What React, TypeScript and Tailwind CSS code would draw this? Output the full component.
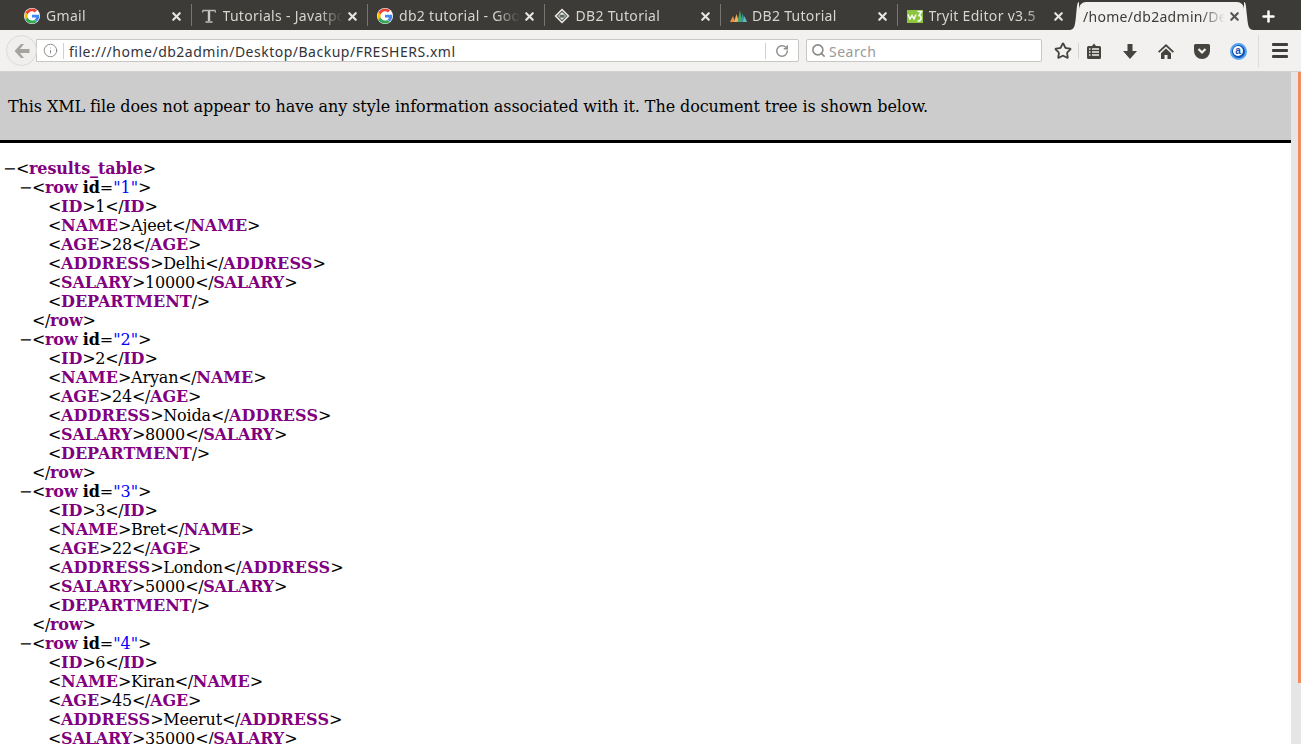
import { X, Info, RotateCw, Search, Star, Plus } from 'lucide-react'

function GoogleIcon() {
  return (
    <svg width="16" height="16" viewBox="0 0 48 48" className="shrink-0 rounded-full bg-white">
      <path fill="#EA4335" d="M24 10c3.500 0 6.400 1.200 8.800 3.300l6.200-6.200C35.200 3.700 30 1.500 24 1.500 15.200 1.500 7.700 6.500 4 13.800l7.300 5.700C13 14 18 10 24 10z" />
      <path fill="#4285F4" d="M45.500 24.500c0-1.600-.1-3.100-.4-4.500H24v8.600h12.100c-.5 2.800-2.100 5.100-4.500 6.700l7 5.400c4.100-3.800 6.900-9.400 6.900-16.200z" />
      <path fill="#FBBC05" d="M11.300 28.500c-.4-1.400-.7-2.900-.7-4.500s.3-3.100.7-4.500L4 13.800C2.400 16.900 1.500 20.400 1.500 24s.9 7.100 2.500 10.200l7.300-5.700z" />
      <path fill="#34A853" d="M24 46.500c6 0 11.100-2 14.600-5.400l-7-5.400c-2 1.300-4.500 2.100-7.600 2.100-6 0-11-4-12.700-9.300L4 34.200C7.700 41.500 15.200 46.500 24 46.500z" />
    </svg>
  )
}

function TypeIcon() {
  return (
    <svg width="16" height="16" viewBox="0 0 16 16" className="shrink-0" fill="none">
      <path d="M1.500 4.500 2 2.500H14L14.500 4.500" stroke="#b8b8b4" strokeWidth="1.300" />
      <path d="M8 3V13" stroke="#c8c8c4" strokeWidth="2.400" />
      <path d="M4.500 14H11.500" stroke="#d8d8d4" strokeWidth="1.300" />
    </svg>
  )
}

function DiamondIcon() {
  return (
    <svg width="16" height="16" viewBox="0 0 16 16" className="shrink-0">
      <path d="M8 .5 15.500 8 8 15.500.5 8z" fill="#f0f0ee" />
      <path d="M8 2.500 13.500 8 8 13.500 2.500 8z" fill="#55554f" />
      <path d="M8 4 12 8 8 12 4 8z" fill="#e4e4e0" />
      <rect x="5.500" y="6.800" width="5" height="2.800" fill="#5a6a5a" />
    </svg>
  )
}

function BarsIcon() {
  return (
    <svg width="17" height="13" viewBox="0 0 17 13" className="shrink-0">
      <path d="M0 12 3 6 5 12z" fill="#ee9040" />
      <path d="M4 12 6.500 4 9 12z" fill="#f0b060" />
      <path d="M7.500 12 10 0 12 12z" fill="#4aa860" />
      <path d="M10.500 12 12.500 3 15 12z" fill="#3a98a8" />
      <path d="M13 12 14.500 6 17 12z" fill="#68b8c0" />
    </svg>
  )
}

function W3Icon() {
  return (
    <svg width="16" height="13" viewBox="0 0 16 13" className="shrink-0">
      <rect width="16" height="13" fill="#8cc63f" />
      <path d="M1 4.500 3 9 5 5.500 7 9 9 4.500" fill="none" stroke="#fff" strokeWidth="1.400" />
      <path d="M10.500 1.500H14.500L12 5.500C15 5.500 15 11.500 10.500 11" fill="none" stroke="#fff" strokeWidth="1.500" />
    </svg>
  )
}

const tabs = [
  { title: 'Gmail', icon: <GoogleIcon /> },
  { title: 'Tutorials - Javatpoint', icon: <TypeIcon /> },
  { title: 'db2 tutorial - Google', icon: <GoogleIcon /> },
  { title: 'DB2 Tutorial', icon: <DiamondIcon /> },
  { title: 'DB2 Tutorial', icon: <BarsIcon /> },
  { title: 'Tryit Editor v3.5', icon: <W3Icon /> },
]

function Tab({ title, icon, last }: { title: string; icon: React.ReactNode; last: boolean }) {
  return (
    <div className="flex h-[30px] w-[176.5px] shrink-0 items-center pl-[9px] pt-[2px]">
      <div className="flex w-[16px] shrink-0 justify-center">{icon}</div>
      <span className="ml-[6px] mt-[-2px] min-w-0 flex-1 overflow-hidden whitespace-nowrap text-[14px] tracking-[0.3px] text-[#d6d5d0] [mask-image:linear-gradient(to_left,transparent,black_24px)]">{title}</span>
      <X size={13} strokeWidth={4} className="ml-[3px] mr-[8px] shrink-0 text-[#e6e6e2]" />
      <div className={`mt-[-2px] h-[22px] w-px shrink-0 ${last ? '' : 'bg-[#77766f]'}`} />
    </div>
  )
}

function TabBar() {
  return (
    <div className="flex h-[30px] items-stretch bg-[#3c3b37] pl-[15px]">
      {tabs.map((t, i) => (
        <Tab key={i} title={t.title} icon={t.icon} last={i === tabs.length - 1} />
      ))}
      <div className="ml-[-4px] mt-[2px] flex h-[28px] shrink-0">
        <svg width="9" height="28" viewBox="0 0 9 28" className="shrink-0">
          <path d="M0 28C5 27 5 23 6 14 7 5 7 0 9 0V28z" fill="#f2f1f0" />
        </svg>
        <div className="flex h-[28px] w-[165px] shrink-0 items-center rounded-t-[7px] bg-[#f2f1f0] pl-[4px]">
          <span className="min-w-0 flex-1 overflow-hidden whitespace-nowrap text-[14px] tracking-[0.3px] text-[#3c3b37] [mask-image:linear-gradient(to_left,transparent,black_24px)]">/home/db2admin/Desktop</span>
          <X size={13} strokeWidth={4} className="ml-[3px] mt-[1px] shrink-0 text-[#555550]" />
          <div className="w-[3px] shrink-0" />
        </div>
        <svg width="9" height="28" viewBox="0 0 9 28" className="shrink-0">
          <path d="M9 28C4 27 4 23 3 14 2 5 2 0 0 0V28z" fill="#f2f1f0" />
        </svg>
      </div>
      <div className="flex w-[30px] items-center justify-center pt-[2px]">
        <Plus size={17} strokeWidth={3.500} className="text-white" />
      </div>
    </div>
  )
}

function ToolIcon({ children }: { children: React.ReactNode }) {
  return <div className="flex w-[36px] shrink-0 items-center justify-center pt-[1px] text-[#45443f]">{children}</div>
}

function Toolbar() {
  return (
    <div className="flex h-[42px] items-center border-b border-[#d2d1cf] bg-[#f2f1f0] pl-[6px]">
      <div className="z-10 flex h-[31px] w-[31px] shrink-0 items-center justify-center rounded-full border border-[#dcdbd9] bg-[#f0efee]">
        <svg width="16" height="14" viewBox="0 0 16 14" fill="#a5a4a1"><path d="M7 0 .5 7 7 14h3L6 9h9.500V5H6l4-5z" /></svg>
      </div>
      <div className="ml-[-1px] flex h-[23px] w-[763px] shrink-0 items-center rounded-r-[2px] border border-[#c8c7c4] bg-white">
        <Info size={15} strokeWidth={1.500} className="ml-[6px] shrink-0 text-[#8a8987]" />
        <div className="ml-[5px] h-[16px] w-px bg-[#d0d0ce]" />
        <span className="ml-[5px] flex-1 whitespace-nowrap pt-[1px] text-[14px] tracking-[0.5px] text-[#33333a]">file:///home/db2admin/Desktop/Backup/FRESHERS.xml</span>
        <div className="h-[16px] w-px bg-[#d0d0ce]" />
        <RotateCw size={14} strokeWidth={2.500} className="mx-[9px] shrink-0 text-[#8f8e8b]" />
      </div>
      <div className="ml-[7px] flex h-[23px] w-[236px] shrink-0 items-center rounded-[2px] border border-[#c8c7c4] bg-white">
        <Search size={15} strokeWidth={2.500} className="ml-[4px] shrink-0 text-[#8a8987]" />
        <span className="ml-[3px] pt-[1px] text-[14px] tracking-[0.5px] text-[#9a9a97]">Search</span>
      </div>
      <div className="ml-[6px] flex w-[30px] shrink-0 justify-center pt-[1px] text-[#45443f]">
        <Star size={18} strokeWidth={2.400} />
      </div>
      <div className="h-[16px] w-px bg-[#d6d5d3]" />
      <div className="ml-[-3px] flex">
        <ToolIcon>
          <svg width="14" height="16" viewBox="0 0 14 16">
            <path d="M1.500 3H5L7 .5 9 3h3.500A1.500 1.500 0 0 1 14 4.500V14.500A1.500 1.500 0 0 1 12.500 16H1.500A1.500 1.500 0 0 1 0 14.500V4.500A1.500 1.500 0 0 1 1.500 3z" fill="currentColor" />
            <path d="M2 6H3.500M2 9H3.500M2 12H3.500M5 6H12M5 9H12M5 12H12" stroke="#f2f1f0" strokeWidth="1.500" />
          </svg>
        </ToolIcon>
        <ToolIcon>
          <svg width="14" height="15" viewBox="0 0 14 15" fill="currentColor"><path d="M4.500 0h5v7H14l-7 8-7-8h4.500z" /></svg>
        </ToolIcon>
        <ToolIcon>
          <svg width="16" height="15" viewBox="0 0 16 15" fill="currentColor"><path d="M8 0 16 7.500 14.800 8.800 8 2.600 1.200 8.800 0 7.500zM3 9.200 8 4.600l5 4.600V15H9.500v-4h-3v4H3z" /></svg>
        </ToolIcon>
        <ToolIcon>
          <svg width="16" height="15" viewBox="0 0 16 15"><path d="M1.500 0h13A1.500 1.500 0 0 1 16 1.500V7a8 8 0 0 1-16 0V1.500A1.500 1.500 0 0 1 1.500 0z" fill="currentColor" /><path d="M4.500 5 8 8.500 11.500 5" fill="none" stroke="#f2f1f0" strokeWidth="2.200" /></svg>
        </ToolIcon>
        <ToolIcon>
          <div className="flex h-[17px] w-[17px] items-center justify-center rounded-full border-2 border-[#58a6f0] bg-[#0f4fb0]">
            <div className="flex h-[10px] w-[10px] items-center justify-center rounded-full bg-white font-['Liberation_Sans',sans-serif] text-[10px] font-bold leading-none text-[#0f4fb0]">a</div>
          </div>
        </ToolIcon>
      </div>
      <div className="ml-[2px] h-[32px] w-px bg-[#dcdbd9]" />
      <div className="flex flex-1 justify-center">
        <div className="flex w-[16px] flex-col gap-[3px]">
          <div className="h-[3px] rounded-[1px] bg-[#3f3e3a]" />
          <div className="h-[3px] rounded-[1px] bg-[#3f3e3a]" />
          <div className="h-[3px] rounded-[1px] bg-[#3f3e3a]" />
        </div>
      </div>
    </div>
  )
}

function Br({ c }: { c: string }) {
  return <span className="tracking-[-0.4px] text-black">{c}</span>
}

// the screenshot's hinted glyphs don't scale evenly, so the tag names get their own spacing
const nameSpacing: Record<string, string> = {
  ADDRESS: 'tracking-[0.1px]',
  SALARY: 'tracking-[-0.15px]',
  DEPARTMENT: 'tracking-[0px]',
  NAME: 'tracking-[0px]',
}

function Name({ n }: { n: string }) {
  return <span className={`font-bold text-[#800080] ${nameSpacing[n] ?? 'tracking-[-0.1px]'}`}>{n}</span>
}

function Field({ name, value }: { name: string; value?: string }) {
  return (
    <div className="pl-[48px]">
      <Br c="<" /><Name n={name} />
      {value === undefined ? <Br c="/>" /> : (
        <>
          <Br c=">" /><span className="tracking-[-0.15px]">{value}</span><Br c="</" /><Name n={name} /><Br c=">" />
        </>
      )}
    </div>
  )
}

const rows = [
  { id: '1', name: 'Ajeet', age: '28', address: 'Delhi', salary: '10000' },
  { id: '2', name: 'Aryan', age: '24', address: 'Noida', salary: '8000' },
  { id: '3', name: 'Bret', age: '22', address: 'London', salary: '5000' },
  { id: '4', name: 'Kiran', age: '45', address: 'Meerut', salary: '35000' },
]

function Row({ row }: { row: (typeof rows)[number] }) {
  return (
    <>
      <div className="pl-[19px]">
        <span className="mr-[1px] inline-block w-[12px]">−</span><Br c="<" /><Name n="row" /> <span className="font-bold tracking-[-0.1px]">id</span>=<span className="text-[#0000ff]">"{row.id}"</span><Br c=">" />
      </div>
      <Field name="ID" value={row.id === '4' ? '6' : row.id} />
      <Field name="NAME" value={row.name} />
      <Field name="AGE" value={row.age} />
      <Field name="ADDRESS" value={row.address} />
      <Field name="SALARY" value={row.salary} />
      {row.id !== '4' && (
        <>
          <Field name="DEPARTMENT" />
          <div className="pl-[32px]"><Br c="</" /><Name n="row" /><Br c=">" /></div>
        </>
      )}
    </>
  )
}

export default function App() {
  return (
    <div className="flex h-[744px] w-[1301px] flex-col overflow-hidden bg-white font-['Noto_Sans',sans-serif]">
      <TabBar />
      <Toolbar />
      <div className="flex min-h-0 flex-1">
        <div className="min-w-0 flex-1 overflow-hidden font-['DejaVu_Serif',serif] text-[16px] leading-[19px] text-black">
          <div className="flex h-[71px] items-center border-b-[3px] border-black bg-[#cccccc] pl-[8px] tracking-[-0.09px]">
            This XML file does not appear to have any style information associated with it. The document tree is shown below.
          </div>
          <div className="whitespace-nowrap pt-[16px]">
            <div className="pl-[3px]">
              <span className="mr-[1px] inline-block w-[12px]">−</span><Br c="<" /><span className="font-bold tracking-[-0.1px] text-[#800080]">results_table</span><Br c=">" />
            </div>
            {rows.map(r => <Row key={r.id} row={r} />)}
          </div>
        </div>
        <div className="flex w-[10px] shrink-0 justify-end bg-[#e6e6e6]">
          <div className="h-[611px] w-[3px] bg-[#f28b5e]" />
        </div>
      </div>
    </div>
  )
}
